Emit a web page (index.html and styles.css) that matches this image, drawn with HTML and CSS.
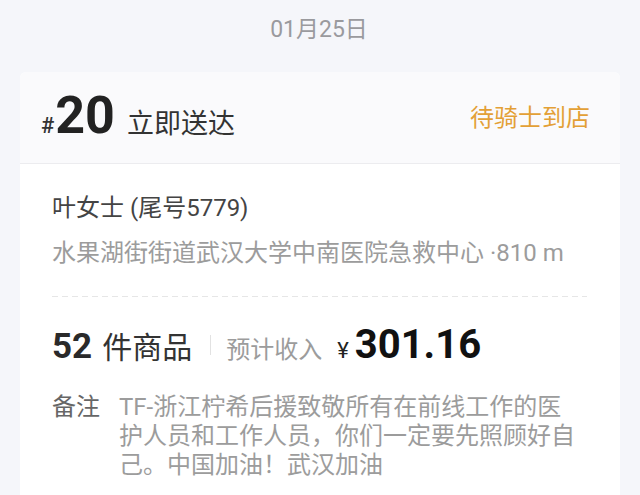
FILE: index.html
```html
<!DOCTYPE html>
<html lang="zh-CN">
<head>
<meta charset="utf-8">
<title>订单</title>
<link rel="stylesheet" href="styles.css">
</head>
<body>
<div class="page">
  <div class="date">01月25日</div>
  <div class="card">
    <div class="card-head">
      <div class="order-id">
        <span class="hash">#</span><span class="num">20</span><span class="type">立即送达</span>
      </div>
      <div class="status">待骑士到店</div>
    </div>
    <div class="card-body">
      <div class="name">叶女士 (尾号5779)</div>
      <div class="addr">水果湖街街道武汉大学中南医院急救中心 ·810 m</div>
      <div class="dash"></div>
      <div class="goods">
        <span class="count">52</span><span class="unit">件商品</span><span class="sep"></span><span class="income-label">预计收入</span><span class="yen">¥</span><span class="amount">301.16</span>
      </div>
      <div class="remark">
        <span class="remark-label">备注</span>
        <span class="remark-text">TF-浙江柠希后援致敬所有在前线工作的医护人员和工作人员，你们一定要先照顾好自己。中国加油！武汉加油</span>
      </div>
    </div>
  </div>
</div>
</body>
</html>
```

FILE: styles.css
```css
* { box-sizing: border-box; }
html, body {
  margin: 0;
  padding: 0;
  background: #f5f6fa;
  font-family: Roboto, "Noto Sans CJK SC", sans-serif;
}
.page {
  width: 640px;
  height: 495px;
  overflow: hidden;
  padding-top: 14px;
}
.date {
  text-align: center;
  font-size: 23px;
  line-height: 32px;
  color: #9a9a9e;
  padding-right: 2px;
}
.card {
  margin: 26px 20px 0;
  background: #fff;
  border-radius: 6px 6px 0 0;
  overflow: hidden;
}
.card-head {
  height: 92px;
  background: #fafafc;
  border-bottom: 1px solid #ececef;
  display: flex;
  align-items: center;
  justify-content: space-between;
  padding: 0 30px 0 21px;
}
.order-id {
  display: flex;
  align-items: baseline;
  line-height: 1;
  color: #222;
  margin-top: -4px;
}
.hash {
  font-size: 22px;
  font-weight: 500;
  color: #333;
  margin-right: 1px;
}
.num {
  font-size: 52px;
  font-weight: 700;
  color: #222;
}
.type {
  font-size: 27px;
  color: #333;
  margin-left: 12px;
}
.status {
  font-size: 24px;
  color: #e3a036;
  margin-top: -4px;
}
.card-body {
  padding: 27px 33px 40px 32px;
}
.name {
  font-size: 24px;
  line-height: 34px;
  color: #444;
}
.addr {
  margin-top: 11px;
  font-size: 24px;
  line-height: 34px;
  color: #9c9c9c;
}
.dash {
  margin-top: 26px;
  height: 1px;
  background-image: linear-gradient(to right, #e6e6e6 60%, transparent 0);
  background-size: 10px 1px;
}
.goods {
  margin-top: 24px;
  height: 48px;
  display: flex;
  align-items: baseline;
  line-height: 48px;
}
.count {
  font-size: 35px;
  font-weight: 700;
  color: #2a2a2a;
}
.unit {
  font-size: 30px;
  color: #333;
  margin-left: 10px;
}
.sep {
  width: 1px;
  height: 20px;
  background: #e2e2e2;
  margin: 0 15px 0 18px;
  align-self: center;
}
.income-label {
  font-size: 24px;
  color: #9c9c9c;
}
.yen {
  font-size: 22px;
  color: #222;
  margin-left: 15px;
  margin-right: 6px;
}
.amount {
  font-size: 40px;
  font-weight: 700;
  color: #111;
}
.remark {
  margin-top: 24px;
  display: flex;
  align-items: flex-start;
  font-size: 24px;
  line-height: 29px;
}
.remark-label {
  color: #666;
  flex: none;
  width: 67px;
}
.remark-text {
  color: #9c9c9c;
  width: 466px;
}
```
